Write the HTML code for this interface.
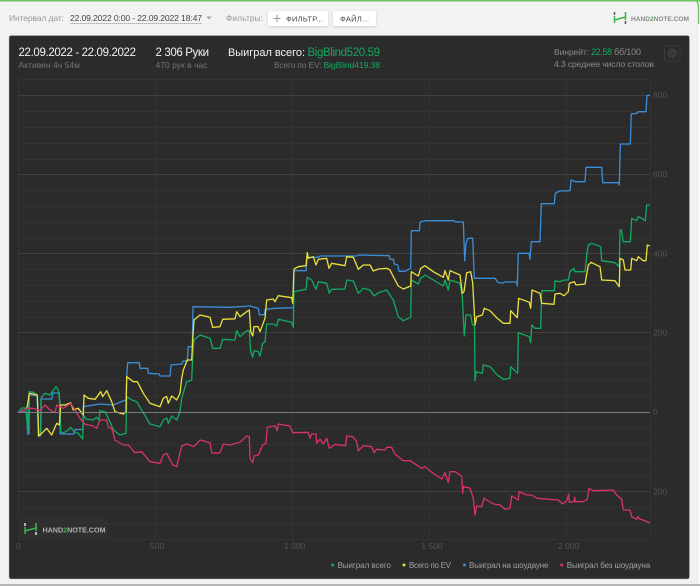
<!DOCTYPE html>
<html><head><meta charset="utf-8"><style>
html,body{margin:0;padding:0;width:700px;height:586px;overflow:hidden;background:#f2f2f2}
svg{display:block;position:absolute;left:0;top:0;filter:blur(.3px)}
text{font-family:"Liberation Sans",sans-serif}
.l{fill:none;stroke-width:1.3;stroke-linejoin:round;stroke-linecap:round}
.ax{font-size:8.5px;fill:#535353}
.lg{font-size:8px;fill:#a0a0a0}
</style></head><body>
<svg width="700" height="586" viewBox="0 0 700 586" xmlns="http://www.w3.org/2000/svg">
<defs><filter id="s" x="-10%" y="-20%" width="120%" height="150%"><feDropShadow dx="0" dy="1" stdDeviation="1" flood-color="#000" flood-opacity=".15"/></filter></defs>
<rect width="700" height="586" fill="#f2f2f2"/>
<rect x="0" y="0" width="700" height="1.5" fill="#6cc25f"/>
<path d="M692 0Q698.5 0 698.5 7V24" fill="none" stroke="#6cc25f" stroke-width="1.3"/>
<rect x="699" y="24" width="1" height="562" fill="#fff"/>
<rect x="0" y="584" width="700" height="2" fill="#b5b5b5"/>

<text x="9" y="21" font-size="8.5" fill="#999" textLength="55">Интервал дат:</text>
<text x="70" y="21" font-size="8.6" fill="#444" textLength="132">22.09.2022 0:00 - 22.09.2022 18:47</text>
<line x1="70" y1="23.5" x2="202" y2="23.5" stroke="#999" stroke-width=".7" stroke-dasharray="1.5 .5"/>
<path d="M206 16.5h6l-3 3z" fill="#aaa"/>
<text x="226" y="21" font-size="8.3" fill="#999" textLength="37">Фильтры:</text>
<rect x="268" y="11" width="60" height="15" rx="2" fill="#fff" filter="url(#s)"/>
<path d="M277 15v7M273.5 18.5h7" stroke="#999" stroke-width="1"/>
<text x="286" y="21.5" font-size="7.5" fill="#444" textLength="37">ФИЛЬТР...</text>
<rect x="333" y="11" width="43" height="15" rx="2" fill="#fff" filter="url(#s)"/>
<text x="340" y="21.5" font-size="7.5" fill="#444" textLength="29">ФАЙЛ...</text>

<path d="M614.5 12v3M625.5 21v3" stroke="#555" stroke-width="1.5"/>
<path d="M614.5 16v7M625.5 12v8M614.5 20l11-3" fill="none" stroke="#3cb54a" stroke-width="1.5"/>
<text x="631" y="21" font-size="6.6" font-weight="bold" fill="#8a8a8a" textLength="58">HAND<tspan fill="#3cb54a">2</tspan>NOTE.COM</text>

<rect x="9" y="35.5" width="680.5" height="543.5" rx="2" fill="#2b2b2b" stroke="#bbb" stroke-width=".5"/>

<text x="18.5" y="56" font-size="11.5" fill="#f2f2f2" textLength="117.5">22.09.2022 - 22.09.2022</text>
<text x="18.5" y="68" font-size="8.5" fill="#757575" textLength="61.5">Активен 4ч 54м</text>
<text x="155.5" y="56" font-size="11.5" fill="#f2f2f2" textLength="53.5">2 306 Руки</text>
<text x="155.5" y="68" font-size="8.5" fill="#757575" textLength="52">470 рук в час</text>
<text x="228" y="56" font-size="11" fill="#f2f2f2" textLength="77">Выиграл всего:</text>
<text x="307.5" y="56" font-size="11.5" fill="#14a85f" textLength="72.5">BigBlind520.59</text>
<text x="274" y="68" font-size="8.2" fill="#757575" textLength="47.5">Всего по EV:</text>
<text x="323.5" y="68" font-size="8.6" fill="#14a85f" textLength="56.5">BigBlind419.38</text>
<text x="554" y="55" font-size="8.6" fill="#8a8a8a" textLength="35">Винрейт:</text>
<text x="591" y="55" font-size="9" fill="#14a85f" textLength="21">22.58</text>
<text x="614" y="55" font-size="9" fill="#8a8a8a" textLength="27">бб/100</text>
<text x="554" y="67" font-size="8.7" fill="#8a8a8a" textLength="100">4.3 среднее число столов</text>
<rect x="664.5" y="45.5" width="15.5" height="15.5" rx="1" fill="none" stroke="#3a3a3a"/>
<circle cx="672.3" cy="53.2" r="2" fill="none" stroke="#555" stroke-width=".8"/>
<circle cx="672.3" cy="53.2" r="4" fill="none" stroke="#555" stroke-width="1.3" stroke-dasharray="1.5 1"/>

<!-- minor grid -->
<path stroke="#323232" stroke-width="1" fill="none" d="M18 79.5H650M18 111.5H650M18 127.5H650M18 143.5H650M18 159.5H650M18 190.5H650M18 206.5H650M18 222.5H650M18 238.5H650M18 269.5H650M18 285.5H650M18 301.5H650M18 317.5H650M18 348.5H650M18 364.5H650M18 380.5H650M18 396.5H650M18 428.5H650M18 444.5H650M18 460.5H650M18 475.5H650M18 507.5H650M18 523.5H650M18 539.5H650M18.5 79V539M155.5 79V539M292.5 79V539M429.5 79V539M566.5 79V539M650.5 79V539"/>
<path stroke="#404040" stroke-width="1" fill="none" d="M18 95.5H650M18 174.5H650M18 253.5H650M18 332.5H650M18 491.5H650"/>

<polyline class="l" stroke="#3a8fdb" points="18,412 26.7,412 27.7,434 29,434 29.3,395 37.3,395.7 38.3,436 40.5,436 41,399 51.7,399 52.7,393 59.3,393 60.3,434 74,434 75,429.5 83,429.5 83.3,406.7 100,404 113,405 123,401 126,400 127,372 127.7,362.7 139.3,362.7 140,368.3 147.7,368.3 148.3,373.3 159.3,374 160,376 170,376 171,365 181.7,364 183,361 187.3,361 188.3,346.7 192.3,346.7 193,306.7 230,307.3 250,306 258.3,308.3 259.3,314.7 264.3,314.7 265.3,309.3 275,308.3 293.3,307.7 294,270.7 306,270.7 307.3,257.3 318.3,257.3 320,256 356.7,256 358.3,255 389.3,255.7 390,259.3 393.3,259.3 394.3,264 397.7,265 399,271.3 405,271.3 410.7,268.3 411.3,230.7 419.3,230.7 420.3,221.7 425,220.7 454,220.7 455,221.7 463.3,222 464.7,260.7 466,243.3 468,238.3 472.7,238.3 474.3,278.3 495,278.3 498.3,282.7 503,283 505,282 516.7,282 517.3,286 518.3,253.3 529,253.3 530,259.3 531.3,241.7 540,241.7 541.3,203.7 554.3,203.7 555.3,193.3 559.3,191 570,190.7 571,180 575,181.7 585,181.7 586,167.3 601.7,167.3 602.7,182.7 618.7,182.7 619.3,185 620.3,144 630.3,144 631.3,114 636.7,113.3 638.3,111.7 646,111.7 647,95.7 649.3,95.3"/>

<polyline class="l" stroke="#12ab62" points="19.3,412 21.7,408 26,408 27.7,433 29.3,391.7 33.3,392.3 37.3,395 38.7,435 40.7,435 41.3,397.3 45,393.3 50,395 56,386.7 58.3,390 60,403 60.7,431.7 63.3,433 68.3,430 70.7,427.3 74,431.7 78.3,433.3 82.7,439 83.3,415 86,419 93.3,420 96.7,417.3 99,420 100,410.7 105,411.7 108.3,418.3 113.3,430 120,435 126,433.3 126.7,396.7 131.7,400 136.7,401.7 143.3,412.7 150,424 160,426.7 163.3,420 166.7,418 168.3,423.3 171.7,416 176.7,420 180,411.7 181.7,398.3 186.7,381.7 191.7,380 192.7,356.7 194,340 200,335 210,338.3 212.7,348.3 220,348.3 222.7,339.3 235,340 236.7,330.7 240,336.7 246.7,330.7 249.3,330.7 250.7,351.7 252.7,357.3 254,350.7 258,351.5 260,356 262.7,343.3 265,341.7 266.7,324 273.3,324 276.7,326 278.3,319.3 291.7,322.3 293.3,327.3 294,291.7 306,289.3 307.3,277.3 311.7,280 316,289.3 318.3,281.7 326.7,283.3 329.3,293.3 331.7,289.3 345,289 346.7,280 353.3,281 358.3,293.3 363.3,288.3 370,290 374,296 378.3,292.7 386.7,290 390,295 393.3,300 398.3,316.7 403.3,320.7 410.7,317.3 411.3,280 418.3,284 420.7,278.3 425,275 433.3,280 443.3,286 445,280 448.3,290 450,280 460,283.3 462.3,296.7 464.3,336 466,315 470.7,315 472.5,325 474.5,325 475,380.7 476,371.7 482.3,373.3 483.3,365 490,366.7 497.3,375 503.3,379.3 510,378.3 510.7,366.7 517.7,373.3 518.3,332.7 529.3,336.7 530.7,342.7 531.7,325 535,328.3 540.7,328.3 541.7,290.7 554.3,290.7 555,280.7 560,281.7 564,280 568.3,280 570,271.7 574,268.3 575,271.7 585,271.7 586.7,255 588.3,245 591.7,243.3 600.7,246.7 601.7,260.7 615,262.7 619.3,266.7 620,230 621.3,230 623.3,241.7 630.3,241.7 631.7,218.3 636.7,220.7 638.3,216.7 641.7,218.3 645.3,220.7 646.7,205 649.3,205"/>

<polyline class="l" stroke="#ece03c" points="27,408 29.3,393.3 37.3,395 38.7,436 41.7,433.3 46.7,428.3 51.7,435 56.7,423.3 59.3,425 60.7,405 65,405 70.7,402.7 73.3,410 78.3,408.3 83.3,415 84,395 88.3,398.3 95,399.3 100.7,391.7 102.7,396.7 106.7,390.7 111.7,401.7 115,411.7 123.3,414 126,411.7 126.7,376.7 133.3,381.7 137.3,381.7 143.3,393.3 150,403.3 160,406.7 163.3,398.3 166.7,396.5 168.3,403.3 171.7,396 176.7,400 180,393.3 181.7,378.3 183.3,370 187.3,360 191.7,360 192.7,340 194,320 200,315 210,317.3 212.7,327.3 220,326.7 222.7,319.3 235,318.8 236.7,311.7 240,316.7 246.7,311.7 249.3,310 250.7,331.7 252.7,336 254,326.7 258,326.5 260,331.7 265,318.3 266.7,300 273.3,299 275,301.7 278.3,295.7 291.7,297.7 292.7,303.3 294,269 298.3,266.7 306,265.7 307.3,252.7 308.3,258.3 313.3,256.7 316,265 318.3,259.3 326.7,258.3 329,268.3 331.7,263.3 345,265.7 346.7,256.7 353.3,257.3 358.3,269.3 363.3,265 370,265 373.3,271 378.3,269 386.7,268.3 390,270 393.3,276.7 398.3,286 403.3,289 410.7,286 411.3,271.7 418.3,276 420.7,268.3 425,265.7 433.3,271.7 443.3,277.3 445,270.7 448.3,280 450,270.7 460,275 462.3,293.3 464,291.7 466.7,272.7 470.7,271.7 472.7,283 475,325 476.7,316.7 482.3,315 484.3,308.3 490,310.7 497.3,318.3 503.3,323.3 510,323.3 510.7,310.7 517.3,317.7 518.7,298.3 529.3,302.3 530.7,308.3 532,290 540,293.3 541.7,303.3 554,304.3 555,294 560,293.3 564,295.7 568.3,291.7 569.3,283.3 574.3,281.7 576,285 585,284 588.3,265 591,262.3 600,266.7 601.7,280 615,280.7 619.3,286.7 620,258.3 623.3,260 625,270 630.7,270 631.7,258.3 636.7,260.7 638.3,256.7 643.3,260.7 646,260.7 647.3,245 649.3,245.7"/>

<polyline class="l" stroke="#d9326f" points="20,412 26.7,408.3 33.3,408.3 40,410.7 45,405 50,410 55,412.7 56.7,405 63.3,408.3 70.7,403.3 75,410 80,418.3 85,424.3 93.3,426 96.7,428.3 100,420 106.7,420 108.3,427.3 111.7,428.3 115,440 123.3,445 128.3,445 135,452.7 141.7,451.7 150,461.7 160,463.3 163.3,455 166.7,453.3 172.7,465 176.7,466.7 181.7,446 186.7,444 194,446.7 200,440 210,442.7 211.7,452.7 216.7,453.3 220,452.7 223.3,444 230,445 235,443.5 240,442.3 246.7,436 249.3,436.7 250,458.3 252.7,462.7 254,456 258.3,455 262.7,445 266,443.3 267.3,427.3 275,425.7 277.3,430.7 278.3,424 290,426 292.7,432.7 308.3,432.3 310,438.3 311.7,434 316,434 316.7,443.3 320,439.3 323.3,444 326.7,438.3 329.3,448.3 335,444.3 345.7,445.7 346.7,436 352.7,436.7 356.7,441.7 358.3,450.7 363.3,445.7 371.7,446.7 374,452.7 376.7,449.3 385,450 386.7,447.3 391.7,447.3 395,454 403.3,460.7 410,460.7 421.7,468.3 425,466.7 431.7,472.3 441.7,479 445,472.7 448.3,482.3 450,471.7 455,471.7 461.7,476 462.7,493.3 463.3,486.7 470,488 473.3,498.3 475,515 476.7,506 481.7,506.7 484,498.3 493.3,504 500,505 505,509.3 510,508.3 511.7,496 518.3,500 519,491.7 526.7,495 531.7,495 537.3,498.3 558.3,500 562.7,504 566.7,500.7 568.7,494 569.3,502.3 574,501.7 574.7,497.3 575.3,501.7 583.3,501.7 587.3,499.3 589,488.3 593.3,490.7 613.3,490 616.7,495 621.7,499.3 623.3,510 630,510 631.7,516.7 636.7,519.3 637.7,516.7 640,519.3 643.3,520 649.3,522.7"/>

<line x1="18" y1="412.5" x2="650" y2="412.5" stroke="#8a8a8a" stroke-width="1" opacity=".85"/>

<text class="ax" x="653" y="98">800</text>
<text class="ax" x="653" y="177">600</text>
<text class="ax" x="653" y="256.5">400</text>
<text class="ax" x="653" y="335.5">200</text>
<text class="ax" x="653" y="415">0</text>
<text class="ax" x="653" y="494.5">200</text>
<text class="ax" x="16" y="549">0</text>
<text class="ax" x="150" y="549">500</text>
<text class="ax" x="284" y="549">1 000</text>
<text class="ax" x="421.5" y="549">1 500</text>
<text class="ax" x="558" y="549">2 000</text>

<rect x="18" y="518" width="90" height="20" fill="#2f2f2f"/>
<path d="M25 523v3M36 532v3" stroke="#ddd" stroke-width="1.5"/>
<path d="M25 527v7M36 523v8M25 531l11-3" fill="none" stroke="#3cb54a" stroke-width="1.5"/>
<text x="42.5" y="532.5" font-size="7.2" font-weight="bold" fill="#b0b0b0" textLength="63">HAND<tspan fill="#3cb54a">2</tspan>NOTE.COM</text>

<circle cx="332.7" cy="565" r="1.5" fill="#12ab62"/>
<text class="lg" x="337.5" y="568" textLength="53.5">Выиграл всего</text>
<circle cx="404" cy="565" r="1.5" fill="#ece03c"/>
<text class="lg" x="409" y="568" textLength="42">Всего по EV</text>
<circle cx="464.5" cy="565" r="1.5" fill="#3a8fdb"/>
<text class="lg" x="469" y="568" textLength="79.5">Выиграл на шоудауне</text>
<circle cx="561.7" cy="565" r="1.5" fill="#d9326f"/>
<text class="lg" x="566.7" y="568" textLength="83.5">Выиграл без шоудауна</text>
</svg>
</body></html>
